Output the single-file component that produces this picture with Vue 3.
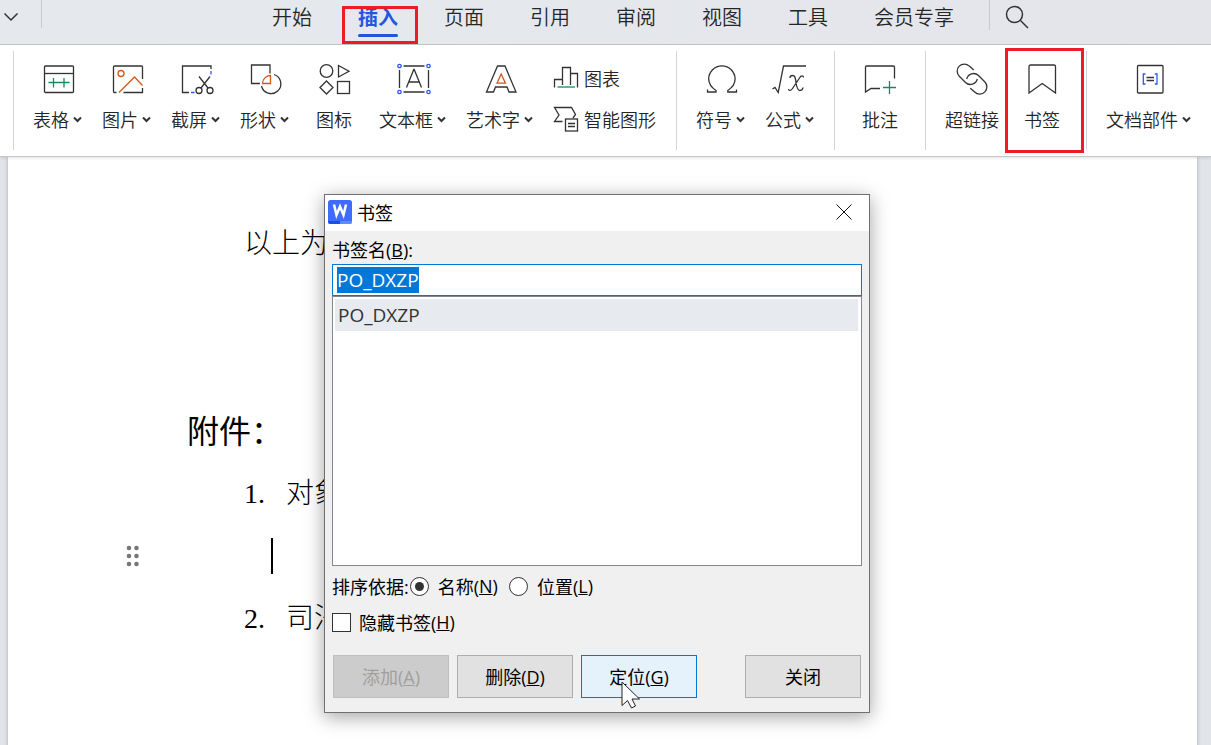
<script setup>
import { onMounted, ref } from 'vue'

const tabs = ['开始', '插入', '页面', '引用', '审阅', '视图', '工具', '会员专享']
const activeTab = ref('插入')

const groups = [
  [
    { id: 'table', label: '表格', menu: true },
    { id: 'image', label: '图片', menu: true },
    { id: 'capture', label: '截屏', menu: true },
    { id: 'shapes', label: '形状', menu: true },
    { id: 'icons', label: '图标', pad: 'wide' },
    { id: 'textbox', label: '文本框', menu: true },
    { id: 'wordart', label: '艺术字', menu: true },
    { id: 'stack' }
  ],
  [
    { id: 'symbol', label: '符号', menu: true },
    { id: 'formula', label: '公式', menu: true }
  ],
  [{ id: 'comment', label: '批注', pad: 'roomy' }],
  [
    { id: 'link', label: '超链接' },
    { id: 'bookmark', label: '书签', pad: 'narrow', marked: true }
  ],
  [{ id: 'parts', label: '文档部件', menu: true }]
]

const art = {
  table: '<rect x="5.5" y="5" width="29" height="26.5" rx="1"/><path d="M5.5 12.5h29"/><path class="green" d="M9.5 21.5h21M14.5 17v9.5M25 17v9.5"/>',
  image: '<path d="M8.5 31.5H6.5a1 1 0 0 1-1-1V6a1 1 0 0 1 1-1h27a1 1 0 0 1 1 1v12M34.5 27v4.500H15.500"/><circle class="orange" cx="13" cy="12.500" r="3"/><path class="orange" d="M11 31.500 26.500 16l8 8.500"/>',
  capture: '<path d="M12 31.500H5.500V5h28.500v3"/><path class="blue" d="M34 10v3.500M14 31.500h3.500"/><circle cx="22" cy="29.500" r="3"/><circle cx="33" cy="29.500" r="3"/><path d="M22 15.500 31 27M33 15.500 24 27"/>',
  shapes: '<path d="M14 22.500H5.500V4h18.500v8.500"/><path class="orange" d="M16.500 22.500h8v-8a8 8 0 0 0-8 8z"/><path d="M28 13.500A9.800 9.800 0 1 1 15.500 25"/>',
  icons: '<circle cx="10.500" cy="10" r="6.300"/><path d="M22.500 4.500v11.500l10.500-5.800zM10.500 20l6.500 6.500-6.500 6.500L4 26.500z"/><rect x="21.500" y="20.500" width="12" height="12"/>',
  textbox: '<path d="M9.500 5h21M9.500 31h21M5.500 9v18M34.500 9v18"/><path d="m12.500 26.500 7.300-18h.4l7.300 18M15 21h10"/><g class="blue"><circle cx="5.500" cy="5" r="1.700"/><circle cx="34.500" cy="5" r="1.700"/><circle cx="5.500" cy="31" r="1.700"/><circle cx="34.500" cy="31" r="1.700"/></g>',
  wordart: '<path d="M16.500 5h7.500l11 26h-7l-2-5H14.500l-2 5H5.500z"/><path class="orange" d="m20.200 13-4.200 9.200h8.400z"/>',
  symbol: '<path d="M5.500 28.500v2.500h8.500v-1.500C9.500 26.500 6.700 23 6.700 18a13.200 13.200 0 0 1 26.400 0c0 5-2.800 8.500-7.300 11.500V31h8.700v-2.500"/>',
  formula: '<path d="m1.500 28 2.500-1.500 3.200 5L12.500 5H35"/><path d="M19 17c0-1.500 1-2.500 2.500-2.500 2.500 0 2.800 2 3.500 7s1.500 8 4 8c1.800 0 2.800-1.500 3-3M32.500 16.500c0-2-2.500-2.500-4 .5l-7 10.500c-1.500 2.500-3.800 2.500-4 .5"/>',
  comment: '<path d="M18 27.500H9L3.500 31V6A1.200 1.200 0 0 1 4.700 5h26.600a1.200 1.200 0 0 1 1.200 1.200V17.500"/><path class="green" d="M21 26.500h13M27.500 20v13"/>',
  link: '<path d="m19.700 9-4.400-3.900A7.100 7.100 0 0 0 5.300 15.200l6.200 6.300A7.100 7.100 0 0 0 23.300 18M16.300 27.300l4.400 3.700A7.100 7.100 0 0 0 30.700 20.700l-6.200-6.200A7.100 7.100 0 0 0 12.700 18"/>',
  bookmark: '<path d="M5 32V5.500A1.500 1.500 0 0 1 6.500 4h23.500a1.500 1.500 0 0 1 1.500 1.500V32L18.200 22.500z"/>',
  parts: '<rect x="7.500" y="4.500" width="25.500" height="27.500" rx="1"/><path class="blue" d="M15.500 13H13.300v10h2.200M24.800 13h2.200v10h-2.200"/><path d="M16.500 16.500h7.500M16.500 19.500h7.500"/>'
}

const bookmarkName = ref('PO_DXZP')
const sortBy = ref('name')
const showHidden = ref(false)
const nameBox = ref(null)

onMounted(() => {
  nameBox.value.focus()
  nameBox.value.select()
})
</script>

<template>
  <div class="app">
    <header class="menu">
      <button class="more" aria-label="展开">
        <svg width="16" height="10" viewBox="0 0 16 10"><path d="m1.500 1.500 6.500 6.500 6.500-6.500" /></svg>
      </button>
      <span class="rule short"></span>
      <nav class="tabs">
        <button
          v-for="tab in tabs"
          :key="tab"
          class="tab"
          :class="{ active: tab === activeTab }"
          @click="activeTab = tab"
        >{{ tab }}</button>
      </nav>
      <span class="rule"></span>
      <button class="search" aria-label="搜索">
        <svg width="24" height="24" viewBox="0 0 24 24"><circle cx="9.500" cy="9.500" r="8" /><path d="m15.500 15.500 7.500 7.500" /></svg>
      </button>
    </header>

    <section class="ribbon">
      <div v-for="(group, g) in groups" :key="g" class="group">
        <template v-for="tool in group" :key="tool.id">
          <div v-if="tool.id === 'stack'" class="stack">
            <button class="row">
              <svg class="icon" width="26" height="26" viewBox="0 0 26 26">
                <path d="M1.500 22.500V14.500h8M9.500 20V2.500h8V20M17.500 8.500h7v14" />
                <path class="green" d="M4.500 22h17.500" />
              </svg>
              <span>图表</span>
            </button>
            <button class="row">
              <svg class="icon" width="26" height="26" viewBox="0 0 26 26">
                <path d="M9.500 15.500h-8l4.500-6.500-4.500-7.500h17l4 7-2.500 3.500" />
                <rect x="12.500" y="13" width="12" height="12" />
                <path d="M15 17.500h7M15 20.500h7" />
              </svg>
              <span>智能图形</span>
            </button>
          </div>
          <button v-else class="tool" :class="[tool.pad, { marked: tool.marked }]">
            <svg
              class="icon"
              :width="tool.menu ? 37 : 36"
              height="36"
              :viewBox="tool.menu ? '0 0 37 36' : '0 0 36 36'"
              v-html="art[tool.id]"
            ></svg>
            <span class="caption">
              {{ tool.label }}
              <svg v-if="tool.menu" class="chevron" width="9" height="7" viewBox="0 0 9 7"><path d="m1 1.500 3.500 3.500L8 1.500" /></svg>
            </span>
          </button>
        </template>
      </div>
    </section>

    <main class="desk">
      <article class="page">
        <p class="indent">以上为</p>
        <p></p>
        <p></p>
        <h2>附件：</h2>
        <p class="indent item"><span>1.</span>对象</p>
        <div class="current">
          <svg width="14" height="22" viewBox="0 0 14 22">
            <circle cx="3" cy="3" r="2.300" /><circle cx="10.500" cy="3" r="2.300" />
            <circle cx="3" cy="11" r="2.300" /><circle cx="10.500" cy="11" r="2.300" />
            <circle cx="3" cy="19" r="2.300" /><circle cx="10.500" cy="19" r="2.300" />
          </svg>
          <span class="caret"></span>
        </div>
        <p class="indent item"><span>2.</span>司法</p>
      </article>
    </main>

    <form class="dialog" role="dialog" aria-labelledby="dialog-title" @submit.prevent>
      <div class="title">
        <svg class="logo" width="24" height="24" viewBox="0 0 24 24">
          <rect width="24" height="24" rx="2.500" fill="#3f6bff" />
          <path d="M0 21h12v3H2.500A2.500 2.500 0 0 1 0 21.500z" fill="#1650e8" />
          <path d="M12 21h12v.5a2.500 2.500 0 0 1-2.500 2.500H12z" fill="#5c8cff" />
          <path d="M6 4.500 8.500 15 12 6.500 15.500 15 18 4.500" fill="none" stroke="#fff" stroke-width="2.500" />
        </svg>
        <span id="dialog-title">书签</span>
        <button type="button" class="close" aria-label="关闭窗口">
          <svg width="16" height="16" viewBox="0 0 16 16"><path d="m.5.5 15 15M15.500.5l-15 15" /></svg>
        </button>
      </div>
      <div class="body">
        <label class="field" for="bookmark-name">书签名(<u>B</u>):</label>
        <input id="bookmark-name" ref="nameBox" v-model="bookmarkName" class="name" type="text" spellcheck="false" autocomplete="off" />
        <ul class="list" role="listbox" aria-label="书签">
          <li role="option" aria-selected="true">PO_DXZP</li>
        </ul>
        <div class="options sort" role="radiogroup" aria-label="排序依据">
          <span>排序依据:</span>
          <label><input v-model="sortBy" type="radio" name="sort" value="name" />名称(<u>N</u>)</label>
          <label><input v-model="sortBy" type="radio" name="sort" value="place" />位置(<u>L</u>)</label>
        </div>
        <div class="options">
          <label><input v-model="showHidden" type="checkbox" />隐藏书签(<u>H</u>)</label>
        </div>
        <div class="actions">
          <button type="button" disabled>添加(<u>A</u>)</button>
          <button type="button">删除(<u>D</u>)</button>
          <button type="button" class="hot">
            定位(<u>G</u>)
            <svg class="pointer" width="20" height="28" viewBox="0 0 20 28">
              <path d="M1 1v23.500l5.500-5 4 7.500 4-2-3.500-7h7.500z" />
            </svg>
          </button>
          <button type="button" class="last">关闭</button>
        </div>
      </div>
    </form>
  </div>
</template>

<style>
body {
  margin: 0;
  overflow: hidden;
}
</style>

<style scoped>
.app {
  position: relative;
  display: flex;
  flex-direction: column;
  height: 100vh;
  overflow: hidden;
  color: #262626;
  font-family: "Open Sans", "Noto Sans CJK SC", sans-serif;
  font-size: 18px;
  font-weight: 350;
}
button {
  padding: 0;
  border: 0;
  background: none;
  color: inherit;
  font: inherit;
}
svg {
  display: block;
  fill: none;
  stroke: #333;
}
.menu {
  display: flex;
  height: 44px;
  border-bottom: 1px solid #c5c8cb;
  background: linear-gradient(90deg, #e5e9ed, #e4e5eb);
}
.more {
  align-self: flex-start;
  padding: 12px 0 0 3px;
}
.more svg,
.search svg {
  stroke-width: 1.5;
}
.rule {
  width: 1px;
  height: 30px;
  background: #c8cacf;
}
.rule.short {
  height: 28px;
  margin-left: 22px;
}
.tabs {
  display: flex;
  gap: 46px;
  margin: 0 35px 0 230px;
}
.tab {
  position: relative;
  height: 34px;
  font-family: "Noto Sans CJK SC", sans-serif;
  font-size: 20px;
  line-height: 34px;
  white-space: nowrap;
}
.tab.active {
  color: #2355e0;
  font-weight: 700;
}
.tab.active::before {
  content: "";
  position: absolute;
  top: 34px;
  left: 0;
  right: 0;
  height: 3px;
  border-radius: 2px;
  background: #2355e0;
}
.tab.active::after {
  content: "";
  position: absolute;
  top: 6px;
  left: -16px;
  right: -20px;
  height: 32px;
  border: 3px solid #ed1c24;
}
.search {
  align-self: flex-start;
  padding: 5px 0 0 15px;
}
.ribbon {
  position: relative;
  z-index: 1;
  display: flex;
  padding: 6px 0 6px 13px;
  border-bottom: 1px solid #c5c8cb;
  background: #fff;
  box-shadow: 0 1px 3px rgba(0, 0, 0, 0.12);
}
.group {
  display: flex;
  flex: none;
  gap: 20px;
  height: 99px;
  padding: 0 20px 0 19px;
  border-left: 1px solid #d3d5d8;
}
.tool {
  position: relative;
  display: flex;
  flex-direction: column;
  align-items: center;
  padding-top: 10px;
}
.tool.wide {
  padding-left: 7px;
  padding-right: 7px;
}
.tool.roomy {
  padding-left: 8px;
  padding-right: 7px;
}
.tool.narrow {
  padding-left: 5px;
  padding-right: 6px;
}
.tool.marked::after {
  content: "";
  position: absolute;
  top: -3px;
  left: -14px;
  right: -18px;
  height: 99px;
  border: 3px solid #ed1c24;
}
.icon {
  stroke-width: 1.3;
}
.icon :deep(.green) {
  stroke: #138a63;
}
.icon :deep(.orange) {
  stroke: #d05a1c;
}
.icon :deep(.blue) {
  stroke: #2b59e6;
}
.caption {
  display: flex;
  align-items: center;
  gap: 4px;
  height: 26px;
  margin-top: 9px;
  white-space: nowrap;
}
.chevron {
  stroke-width: 2;
}
.stack {
  display: flex;
  flex-direction: column;
  gap: 15px;
  padding-top: 14px;
}
.row {
  display: flex;
  align-items: center;
  gap: 5px;
  height: 26px;
  white-space: nowrap;
}
.desk {
  display: flex;
  flex: 1;
  min-height: 0;
  padding: 0 14px 0 8px;
  background: #e1e4e9;
}
.page {
  flex: 1;
  height: 100vh;
  padding-top: 55px;
  background: #fff;
  box-shadow: 0 0 4px rgba(0, 0, 0, 0.25);
  color: #000;
}
.page p,
.current {
  height: 63px;
  margin: 0;
  line-height: 63px;
}
.page .current {
  height: 61px;
  margin-bottom: 1px;
}
.page h2 {
  height: 61px;
  margin: 0;
  padding-left: 179px;
  font-family: "Noto Sans CJK SC", sans-serif;
  font-size: 32px;
  font-weight: 400;
  line-height: 56px;
}
.indent {
  padding-left: 236px;
  font-family: "Liberation Serif", "Noto Sans CJK SC", serif;
  font-size: 28px;
  font-weight: 300;
}
.item {
  display: flex;
}
.item span {
  width: 42px;
}
.current {
  display: flex;
  align-items: center;
  padding-left: 118px;
}
.current svg {
  fill: #777;
  stroke: none;
}
.caret {
  width: 2px;
  height: 36px;
  margin-left: 131px;
  background: #000;
}
.dialog {
  position: absolute;
  z-index: 2;
  top: 194px;
  left: 324px;
  width: 544px;
  border: 1px solid #707070;
  background: #f0f0f0;
  box-shadow: 0 4px 18px rgba(0, 0, 0, 0.36);
  color: #000;
  font-weight: 400;
}
.title {
  display: flex;
  box-sizing: border-box;
  align-items: center;
  gap: 5px;
  height: 36px;
  padding: 0 17px 2px 3px;
  background: #fff;
}
.logo {
  stroke: none;
}
.close {
  margin-left: auto;
}
.close svg {
  stroke: #111;
}
.body {
  display: flex;
  flex-direction: column;
  padding: 7px 7px 14px;
}
.field {
  align-self: flex-start;
  height: 26px;
  line-height: 24px;
}
.name {
  box-sizing: border-box;
  height: 32px;
  padding: 0 4px;
  border: 1px solid #0078d7;
  outline: 0;
  background: #fff;
  color: #000;
  font: 19px/24px "Open Sans", "Noto Sans CJK SC", sans-serif;
}
.name::selection {
  background: #0078d7;
  color: #fff;
}
.list {
  box-sizing: border-box;
  height: 270px;
  margin: 0;
  padding: 2px 3px 2px 2px;
  border: 1px solid #828790;
  background: #fff;
  list-style: none;
}
.list li {
  height: 32px;
  padding-left: 3px;
  background: #e7eaef;
  color: #333;
  font-size: 19px;
  line-height: 32px;
}
.options {
  display: flex;
  align-items: center;
  height: 36px;
}
.options.sort {
  margin-top: 2px;
}
.options label {
  display: flex;
  align-items: center;
  margin-right: 10px;
}
.options input {
  display: grid;
  place-items: center;
  box-sizing: border-box;
  width: 19px;
  height: 19px;
  margin: 0 8px 0 0;
  border: 1px solid #333;
  background: #fff;
  appearance: none;
}
.options input[type="radio"] {
  margin: 0 9px 0 1px;
  border-radius: 50%;
}
.options input[type="radio"]:checked::before {
  content: "";
  width: 9px;
  height: 9px;
  border-radius: 50%;
  background: #333;
}
.actions {
  display: flex;
  gap: 8px;
  margin-top: 15px;
  padding: 0 1px;
}
.actions button {
  position: relative;
  box-sizing: border-box;
  width: 116px;
  height: 43px;
  padding-bottom: 2px;
  border: 1px solid #adadad;
  background: #e1e1e1;
}
.actions button:disabled {
  border-color: #bfbfbf;
  background: #ccc;
  color: #a0a0a0;
}
.actions .hot {
  border-color: #0078d7;
  background: #e5f1fb;
}
.actions .last {
  margin-left: auto;
}
.pointer {
  position: absolute;
  top: 25px;
  left: 39px;
  fill: #fff;
  stroke: #222;
}
</style>
